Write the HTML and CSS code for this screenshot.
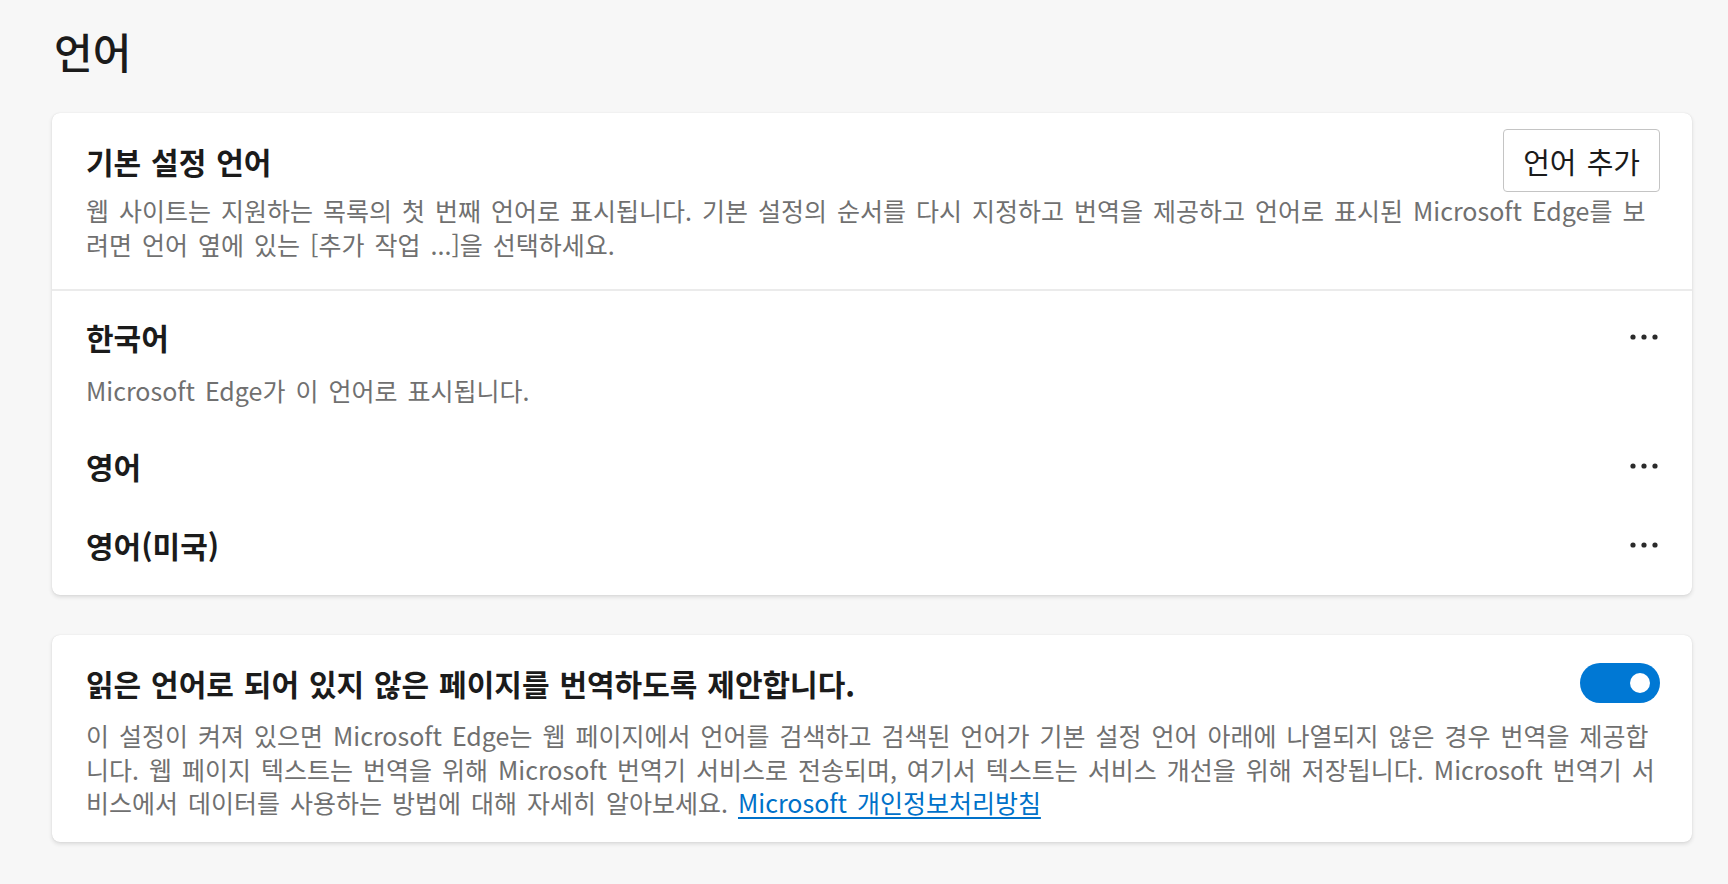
FILE: index.html
```html
<!DOCTYPE html>
<html lang="ko">
<head>
<meta charset="utf-8">
<title>언어</title>
<link rel="stylesheet" href="styles.css">
</head>
<body>
<main class="page">
  <h1 class="page-title">언어</h1>

  <section class="card">
    <div class="card-head">
      <div class="head-row">
        <h2 class="card-title">기본 설정 언어</h2>
        <button class="btn" type="button">언어 추가</button>
      </div>
      <p class="desc">웹 사이트는 지원하는 목록의 첫 번째 언어로 표시됩니다. 기본 설정의 순서를 다시 지정하고 번역을 제공하고 언어로 표시된 Microsoft Edge를 보려면 언어 옆에 있는 [추가 작업 ...]을 선택하세요.</p>
    </div>
    <ul class="lang-list">
      <li class="lang">
        <div class="lang-row">
          <span class="lang-name">한국어</span>
          <button class="more" type="button" aria-label="추가 작업">
            <svg width="28" height="6" viewBox="0 0 28 6"><circle cx="3" cy="3" r="2.6"/><circle cx="14" cy="3" r="2.6"/><circle cx="25" cy="3" r="2.6"/></svg>
          </button>
        </div>
        <p class="lang-sub">Microsoft Edge가 이 언어로 표시됩니다.</p>
      </li>
      <li class="lang">
        <div class="lang-row">
          <span class="lang-name">영어</span>
          <button class="more" type="button" aria-label="추가 작업">
            <svg width="28" height="6" viewBox="0 0 28 6"><circle cx="3" cy="3" r="2.6"/><circle cx="14" cy="3" r="2.6"/><circle cx="25" cy="3" r="2.6"/></svg>
          </button>
        </div>
      </li>
      <li class="lang">
        <div class="lang-row">
          <span class="lang-name">영어(미국)</span>
          <button class="more" type="button" aria-label="추가 작업">
            <svg width="28" height="6" viewBox="0 0 28 6"><circle cx="3" cy="3" r="2.6"/><circle cx="14" cy="3" r="2.6"/><circle cx="25" cy="3" r="2.6"/></svg>
          </button>
        </div>
      </li>
    </ul>
  </section>

  <section class="card card-translate">
    <div class="head-row">
      <h2 class="card-title">읽은 언어로 되어 있지 않은 페이지를 번역하도록 제안합니다.</h2>
      <span class="toggle" role="switch" aria-checked="true"><span class="knob"></span></span>
    </div>
    <p class="desc">이 설정이 켜져 있으면 Microsoft Edge는 웹 페이지에서 언어를 검색하고 검색된 언어가 기본 설정 언어 아래에 나열되지 않은 경우 번역을 제공합니다. 웹 페이지 텍스트는 번역을 위해 Microsoft 번역기 서비스로 전송되며, 여기서 텍스트는 서비스 개선을 위해 저장됩니다. Microsoft 번역기 서비스에서 데이터를 사용하는 방법에 대해 자세히 알아보세요. <a class="link" href="#">Microsoft 개인정보처리방침</a></p>
  </section>
</main>
</body>
</html>
```

FILE: styles.css
```css
* {
  box-sizing: border-box;
}

body {
  margin: 0;
  background: #f7f7f7;
  font-family: "Noto Sans CJK KR", "Noto Sans", sans-serif;
  color: #1b1b1b;
}

.page {
  padding: 23px 36px 40px 52px;
}

.page-title {
  margin: 0 0 34px;
  padding-left: 2px;
  font-size: 42px;
  line-height: 56px;
  font-weight: 500;
  color: #1b1b1b;
}

.card {
  background: #fff;
  border-radius: 8px;
  box-shadow: 0 0 1px rgba(0, 0, 0, 0.14), 0 2px 4px rgba(0, 0, 0, 0.12);
}

.card-head {
  padding: 16px 32px 28px 34px;
  border-bottom: 2px solid #ebebeb;
}

.head-row {
  display: flex;
  align-items: center;
  justify-content: space-between;
  gap: 24px;
}

.card-title {
  margin: 0;
  font-size: 30px;
  line-height: 40px;
  font-weight: 700;
  word-spacing: 1.5px;
}

.btn {
  flex-shrink: 0;
  height: 63px;
  padding: 0 19px;
  border: 1.5px solid #c4c4c4;
  border-radius: 4px;
  background: #fff;
  color: #1b1b1b;
  font-family: inherit;
  font-size: 29px;
  word-spacing: 2px;
}

.desc {
  margin: 2px 0 0;
  font-size: 25px;
  line-height: 33.5px;
  color: #707070;
  word-spacing: 3px;
}

.lang-list {
  list-style: none;
  margin: 0;
  padding: 26px 32px 30px 34px;
}

.lang + .lang {
  margin-top: 39px;
}

.lang-row {
  display: flex;
  align-items: center;
  justify-content: space-between;
  height: 40px;
}

.lang-name {
  font-size: 30px;
  line-height: 40px;
  font-weight: 700;
}

.more {
  display: flex;
  align-items: center;
  justify-content: center;
  width: 28px;
  height: 40px;
  margin-right: 2px;
  padding: 0;
  border: 0;
  background: none;
}

.more svg {
  fill: #2b2b2b;
}

.lang-sub {
  margin: 16px 0 0;
  font-size: 25px;
  line-height: 34px;
  color: #707070;
  word-spacing: 3px;
}

.card-translate {
  margin-top: 40px;
  padding: 28px 32px 22px 34px;
}

.card-translate .desc {
  margin-top: 16px;
}

.toggle {
  flex-shrink: 0;
  display: flex;
  align-items: center;
  justify-content: flex-end;
  width: 80px;
  height: 40px;
  padding: 0 10px;
  border-radius: 20px;
  background: #0078d4;
}

.knob {
  width: 20px;
  height: 20px;
  border-radius: 50%;
  background: #fff;
}

.link {
  display: inline-block;
  color: #0071c9;
  text-decoration: underline;
  text-decoration-thickness: 1.5px;
  text-underline-offset: 4px;
}
```
